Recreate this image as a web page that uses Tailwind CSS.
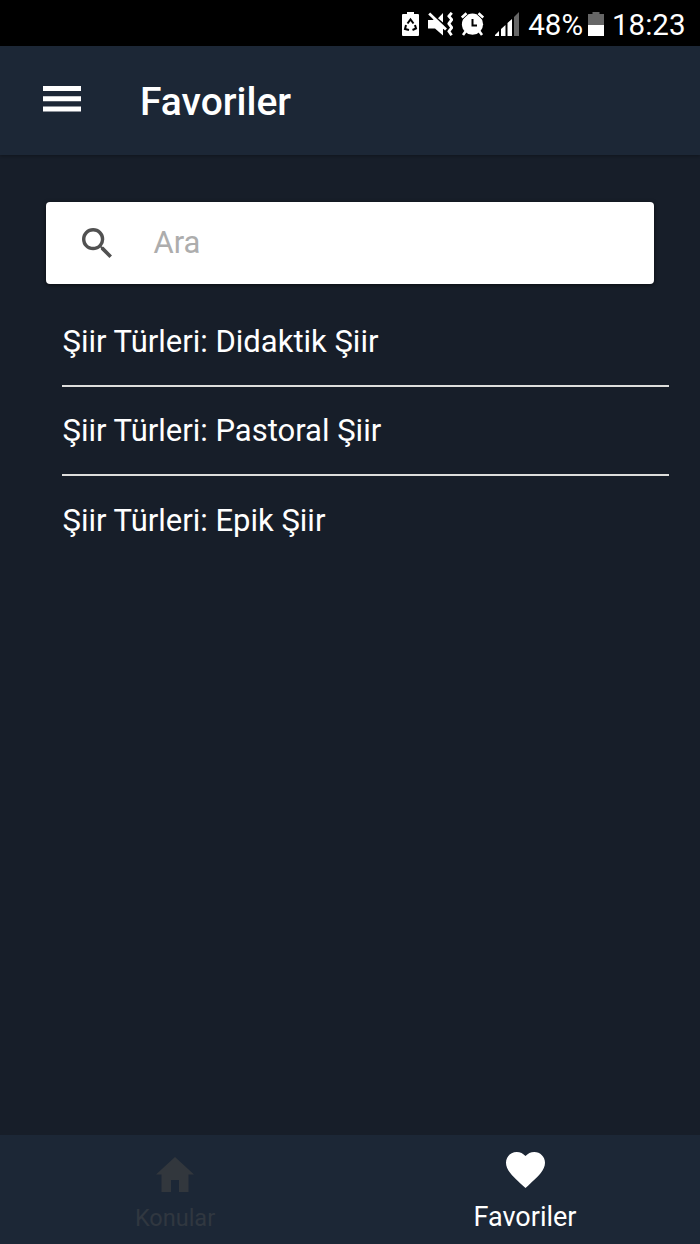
<!DOCTYPE html>
<html lang="tr">
<head>
    <meta charset="UTF-8">
    <meta name="viewport" content="width=device-width, initial-scale=1.0">
    <title>Favoriler</title>
    <script src="https://cdn.jsdelivr.net/npm/@tailwindcss/browser@4"></script>
</head>
<body class="bg-[#171e29] font-[Roboto,sans-serif] text-white">
    <div class="flex flex-col h-[1244px] w-[700px] overflow-hidden">
        <!-- Status bar -->
        <div class="flex items-center justify-end h-[46px] shrink-0 bg-black pr-[15px] pt-1 text-[29.5px] leading-none">
            <!-- Battery saver -->
            <svg class="w-[17px] h-6 mr-[9px] mb-0.5" viewBox="0 0 17 24">
                <path d="M5 0h7v2h4q1 0 1 1v20q0 1-1 1H1q-1 0-1-1V3q0-1 1-1h4z" fill="#fff"/>
                <path d="M5.500 11.500 8.500 7.500l3 4M13 13l1 3.500-3.500 1.500M7 18l-4-1 1-4" fill="none" stroke="#000" stroke-width="2"/>
            </svg>
            <!-- Muted, vibrating -->
            <svg class="w-[25px] h-6 mr-[8px] mb-0.5" viewBox="0 0 25 24">
                <path d="M0 8h5l2-2 10 10-2 1v6.500L7 16.500H0zM10 6.200 15 1v9.500z" fill="#fff"/>
                <path d="M1.200 1.500 18 17.500" stroke="#fff" stroke-width="2.800"/>
                <path d="M23.800 .8 20.800 4.200l3 3.500-3 4 3 4-3 3.600 2.800 3.900" fill="none" stroke="#fff" stroke-width="2.800" stroke-linejoin="round"/>
            </svg>
            <!-- Alarm -->
            <svg class="w-[23px] h-6 mr-[11px] mb-0.5" viewBox="0 0 23 24">
                <circle cx="11.500" cy="12.200" r="10.600" fill="#fff"/>
                <path d="M.8 5.500 5.500 1.200M22.200 5.500 17.500 1.200" stroke="#000" stroke-width="4"/>
                <path d="M.8 5.500 5.500 1.200M22.200 5.500 17.500 1.200M4.500 19.500 2 23M18.500 19.500 21 23" stroke="#fff" stroke-width="2.600"/>
                <path d="M11.500 7v6.500H16" fill="none" stroke="#000" stroke-width="2"/>
            </svg>
            <!-- Signal -->
            <svg class="w-6 h-6 mr-[9px] mb-0.5" viewBox="0 0 24 24">
                <path d="M0 24v-1l4-4v5zM6 24v-7l4.500-4v11zM12.500 24V11L17 7v17z" fill="#fff"/>
                <path d="M19 24V5l5-5v24z" fill="#666"/>
            </svg>
            <span class="-mr-px pt-0.5">48%</span>
            <svg class="w-4 h-6 ml-[6px] mr-[8px] mb-0.5" viewBox="0 0 16 24">
                <path d="M4.500 0h7v2H16v11H0V2h4.500z" fill="#666"/>
                <path d="M0 13h16v11H0z" fill="#fff"/>
            </svg>
            <span class="-mr-[0.5px] pt-0.5">18:23</span>
        </div>

        <!-- Header -->
        <header class="flex items-center h-[109px] shrink-0 bg-[#1c2736] pl-[43px] shadow-[0_1px_3px_rgba(0,0,0,0.3)]">
            <svg class="w-[38px] h-[26px] mb-1" viewBox="0 0 38 26">
                <path d="M0 0h38v5H0zM0 10.300h38v5H0zM0 20.500h38v5H0z" fill="#fff"/>
            </svg>
            <h1 class="ml-[59px] pt-[3px] text-[39px] font-medium leading-none">Favoriler</h1>
        </header>

        <main class="flex-1 px-[46px] pt-[47px]">
            <!-- Search -->
            <div class="flex items-center h-[82px] rounded-[4px] bg-white pl-[36px] shadow-[0_1px_4px_rgba(0,0,0,0.6)]">
                <svg class="w-[30px] h-[30px]" viewBox="3 3 17.500 17.500">
                    <path d="M15.500 14h-.79l-.28-.27A6.471 6.471 0 0 0 16 9.500 6.500 6.500 0 1 0 9.500 16c1.610 0 3.090-.59 4.230-1.570l.27.28v.79l5 4.990L20.490 19l-4.990-5zm-6 0C7.010 14 5 11.990 5 9.500S7.010 5 9.500 5 14 7.010 14 9.500 11.990 14 9.500 14z" fill="#515151"/>
                </svg>
                <span class="ml-[41.5px] pb-[2px] text-[31px] leading-none text-[#adadad]">Ara</span>
            </div>

            <!-- Favorites -->
            <ul class="ml-4 -mr-[15px] pt-3 text-[31px]">
                <li class="flex items-center h-[90.500px] pt-1 pl-[0.5px] border-b-2 border-[#dededc]">Şiir Türleri: Didaktik Şiir</li>
                <li class="flex items-center h-[89.500px] pt-[2px] pl-[0.5px] border-b-2 border-[#dededc]">Şiir Türleri: Pastoral Şiir</li>
                <li class="flex items-center h-[89.500px] pl-[0.5px]">Şiir Türleri: Epik Şiir</li>
            </ul>
        </main>

        <!-- Bottom tabs -->
        <nav class="grid grid-cols-2 h-[109px] shrink-0 bg-[#1c2736]">
            <a href="#" class="flex flex-col items-center pt-[22px] text-[#303740]">
                <svg class="w-[38px] h-[35px]" viewBox="0 0 38 35">
                    <path d="M19 0 38 17.500h-5.500V35H23V23h-8v12H5.500V17.500H0z" fill="#32373d"/>
                </svg>
                <span class="mt-[15px] text-[23.500px] leading-none">Konular</span>
            </a>
            <a href="#" class="flex flex-col items-center pt-[17px]">
                <svg class="w-[39px] h-[36px]" viewBox="2 3 20 18.350" preserveAspectRatio="none">
                    <path d="m12 21.350-1.450-1.320C5.400 15.360 2 12.280 2 8.500 2 5.420 4.420 3 7.500 3c1.740 0 3.410.81 4.500 2.090C13.090 3.810 14.760 3 16.500 3 19.580 3 22 5.420 22 8.500c0 3.780-3.400 6.860-8.550 11.540L12 21.350z" fill="#fff"/>
                </svg>
                <span class="mt-[16px] text-[27px] leading-none">Favoriler</span>
            </a>
        </nav>
    </div>
</body>
</html>
